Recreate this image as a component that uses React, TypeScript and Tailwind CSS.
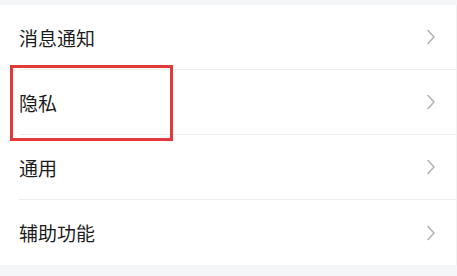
const items = ['消息通知', '隐私', '通用', '辅助功能'];

function Chevron() {
    return (
        <svg width="10" height="16" viewBox="0 0 10 16" fill="none" className="shrink-0">
            <polyline points="2,1.5 8,8 2,14.5" stroke="#b3b3b3" strokeWidth="1.6" strokeLinecap="round" strokeLinejoin="round" />
        </svg>
    );
}

export default function App() {
    return (
        <div className="w-[457px] h-[276px] bg-[#f5f6f8] pt-[5px] overflow-hidden" style={{ fontFamily: '"Noto Sans CJK SC", "Noto Sans", sans-serif' }}>
            <div className="relative bg-white border-r border-[#f1f2f4]">
                {items.map((label, i) => (
                    <div key={label} className="pl-[19px]">
                        <div className={`flex items-center justify-between h-[65px] pr-[20px] ${i < items.length - 1 ? 'border-b border-[#efefef]' : ''}`}>
                            <span className="text-[19px] text-[#1c1c1c] leading-none">{label}</span>
                            <Chevron />
                        </div>
                    </div>
                ))}
                <div className="absolute left-[10px] top-[60px] w-[163px] h-[76px] border-[3px] border-[#e3393c]" />
            </div>
        </div>
    );
}
